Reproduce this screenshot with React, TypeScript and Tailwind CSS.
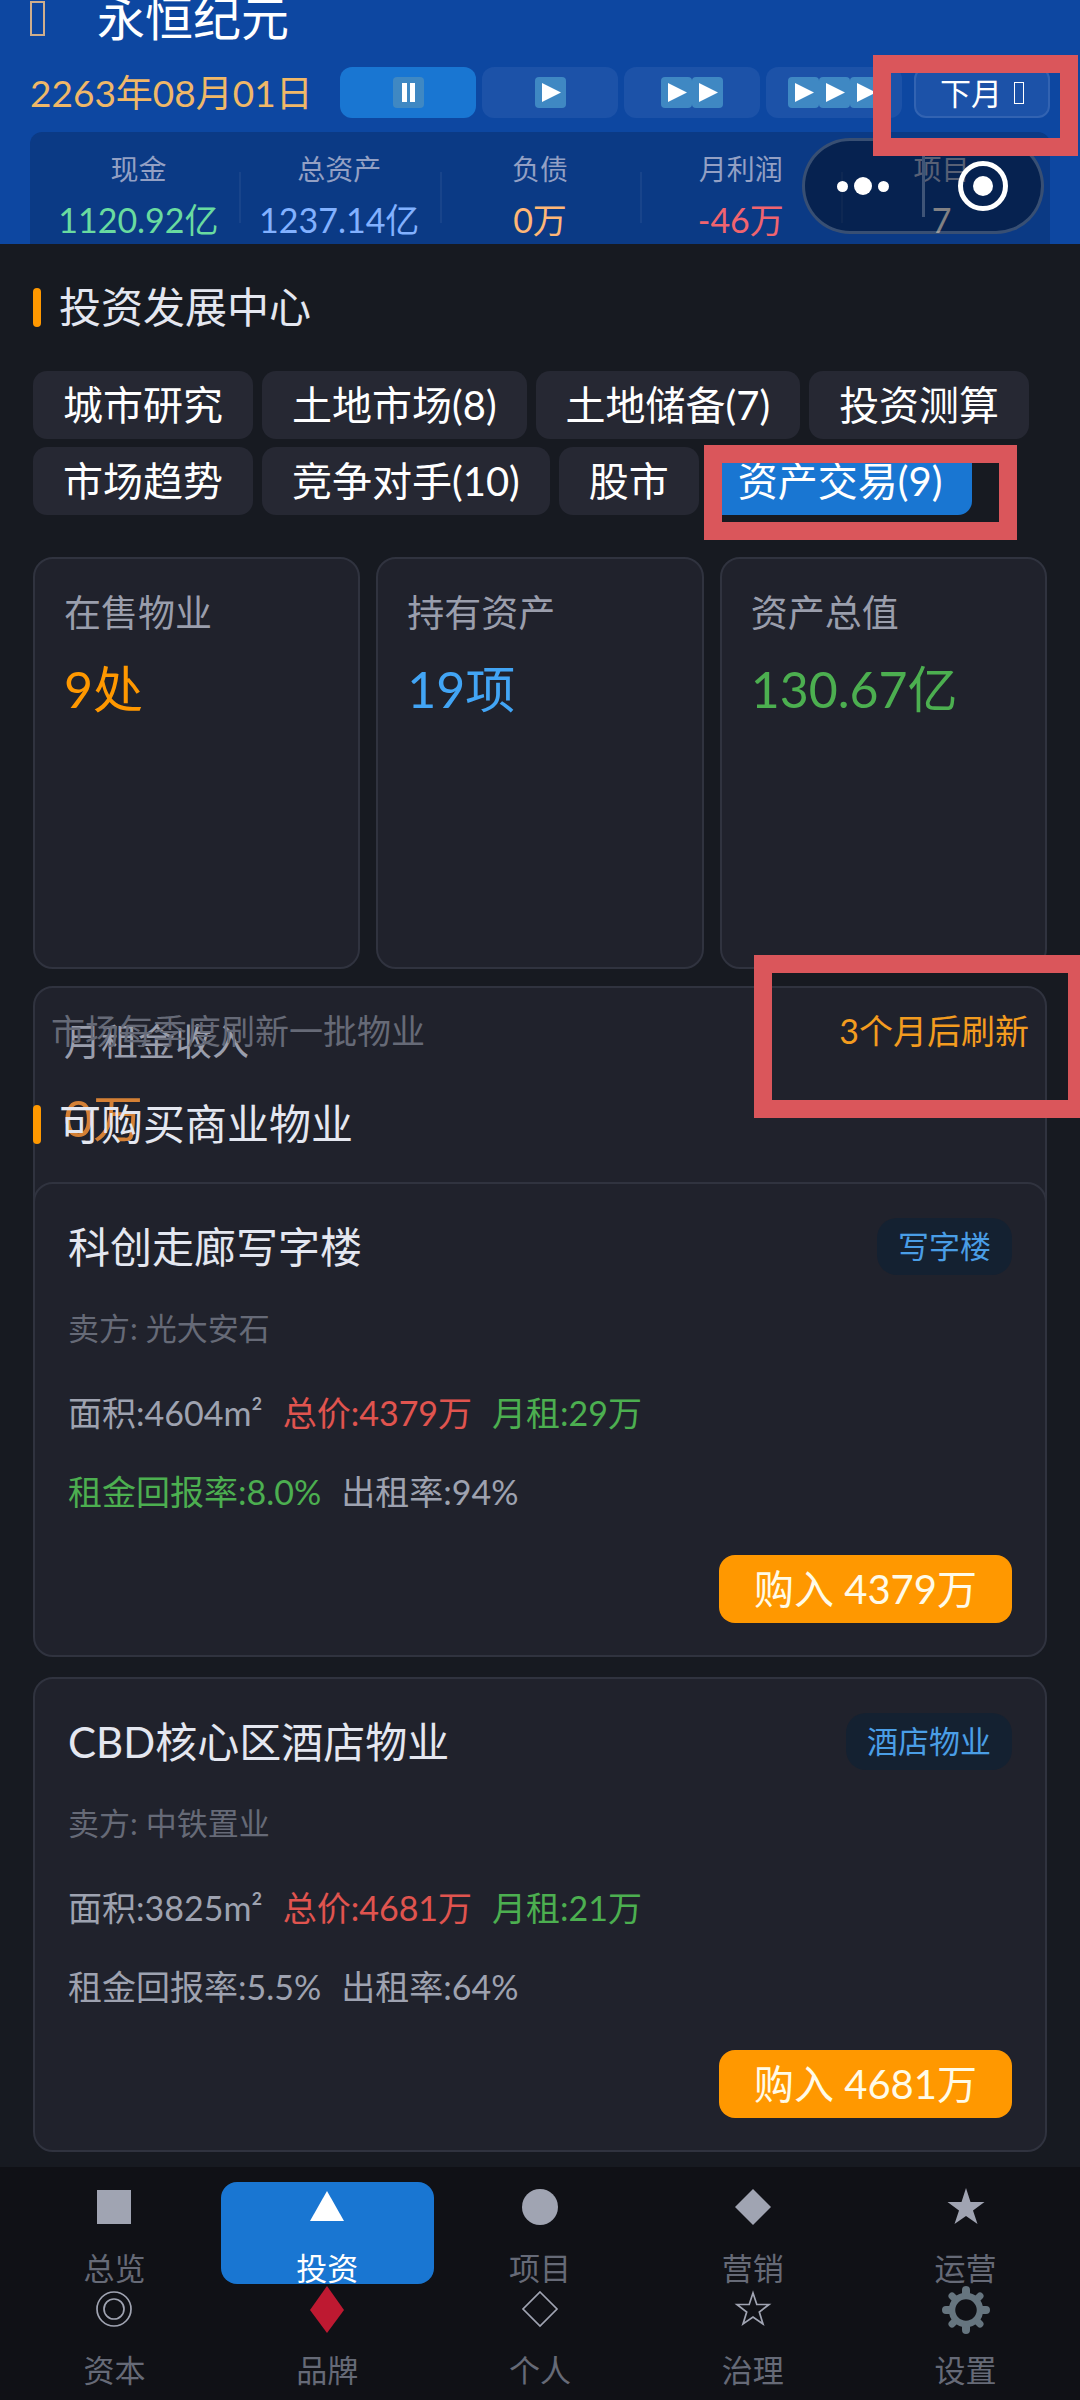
import React from 'react';

type Tone = 'gray' | 'red' | 'green';

interface Property {
    name: string;
    kind: string;
    seller: string;
    price: string;
    facts: { text: string; tone: Tone }[][];
}

const toneClass: Record<Tone, string> = {
    gray: 'text-[#9ea2b0]',
    red: 'text-[#e0544f]',
    green: 'text-[#4caf50]',
};

const finances = [
    { label: '现金', value: '1120.92亿', color: 'text-[#69dba0]' },
    { label: '总资产', value: '1237.14亿', color: 'text-[#82b1ff]' },
    { label: '负债', value: '0万', color: 'text-[#ffb777]' },
    { label: '月利润', value: '-46万', color: 'text-[#f0646f]' },
    { label: '项目', value: '7', color: 'text-[#d8d8dc]' },
];

const tabs = ['城市研究', '土地市场(8)', '土地储备(7)', '投资测算', '市场趋势', '竞争对手(10)', '股市', '资产交易(9)'];

const summary = [
    { label: '在售物业', value: '9处', color: 'text-[#ff9800]' },
    { label: '持有资产', value: '19项', color: 'text-[#42a5f5]' },
    { label: '资产总值', value: '130.67亿', color: 'text-[#4caf50]' },
    { label: '月租金收入', value: '0万', color: 'text-[#d48035]' },
];

const properties: Property[] = [
    {
        name: '科创走廊写字楼',
        kind: '写字楼',
        seller: '光大安石',
        price: '4379万',
        facts: [
            [
                { text: '面积:4604m²', tone: 'gray' },
                { text: '总价:4379万', tone: 'red' },
                { text: '月租:29万', tone: 'green' },
            ],
            [
                { text: '租金回报率:8.0%', tone: 'green' },
                { text: '出租率:94%', tone: 'gray' },
            ],
        ],
    },
    {
        name: 'CBD核心区酒店物业',
        kind: '酒店物业',
        seller: '中铁置业',
        price: '4681万',
        facts: [
            [
                { text: '面积:3825m²', tone: 'gray' },
                { text: '总价:4681万', tone: 'red' },
                { text: '月租:21万', tone: 'green' },
            ],
            [
                { text: '租金回报率:5.5%', tone: 'gray' },
                { text: '出租率:64%', tone: 'gray' },
            ],
        ],
    },
];

const navItems = [
    { label: '总览', icon: <rect x="7" y="8" width="34" height="34" fill="#a0a4b2" /> },
    { label: '投资', icon: <path d="M24 9 L41 39 H7 Z" fill="#fff" /> },
    { label: '项目', icon: <circle cx="24" cy="25" r="18" fill="#a0a4b2" /> },
    { label: '营销', icon: <path d="M24 7 L42 25 L24 43 L6 25 Z" fill="#a0a4b2" /> },
    { label: '运营', icon: <path d="M24 6 L28.5 20 H42.5 L31 28.5 L35.5 42 L24 34 L12.5 42 L17 28.5 L5.5 20 H19.5 Z" fill="#a0a4b2" /> },
    {
        label: '资本',
        icon: (
            <g fill="none" stroke="#a0a4b2" strokeWidth="1.7">
                <circle cx="24" cy="25" r="17" />
                <circle cx="24" cy="25" r="10" />
            </g>
        ),
    },
    { label: '品牌', icon: <path d="M24 2 L41 26 L24 49 L7 26 Z" fill="#be1931" /> },
    { label: '个人', icon: <path d="M24 8 L41 25 L24 42 L7 25 Z" fill="none" stroke="#a0a4b2" strokeWidth="1.7" /> },
    { label: '治理', icon: <path d="M24 9 L27.8 20.5 H40 L30.3 28 L34 40 L24 33 L14 40 L17.7 28 L8 20.5 H20.2 Z" fill="none" stroke="#a0a4b2" strokeWidth="1.7" /> },
    {
        label: '设置',
        icon: (
            <g fill="none" stroke="#66757f">
                <circle cx="24" cy="26" r="14" strokeWidth="6.5" />
                <path
                    d="M24 9 V6 M24 43 V46 M7 26 H4 M41 26 H44"
                    strokeWidth="8"
                    strokeLinecap="round"
                />
                <path d="M12 14 L10 12 M36 14 L38 12 M12 38 L10 40 M36 38 L38 40" strokeWidth="7" strokeLinecap="round" />
            </g>
        ),
    },
];

// Red marker box drawn over a control
function Marker({ className }: { className: string }) {
    return <div className={`pointer-events-none absolute z-30 border-18 border-[#da565b] ${className}`} />;
}

function PlayTile({ paused = false }: { paused?: boolean }) {
    return (
        <svg viewBox="0 0 31 31" className="h-[31px] w-[31px] shrink-0">
            <rect width="31" height="31" rx="4" fill="#3f88c3" />
            {paused ? <path d="M9 6 H14 V25 H9 Z M17 6 H22 V25 H17 Z" fill="#fff" /> : <path d="M7 6 L26 15.5 L7 25 Z" fill="#fff" />}
        </svg>
    );
}

function SectionTitle({ children }: { children: React.ReactNode }) {
    return (
        <h2 className="flex h-14 items-center gap-[18px] text-[42px] leading-[56px] text-[#e4e7f0]">
            <span className="h-[39px] w-2 rounded-full bg-[#ff9800]" />
            {children}
        </h2>
    );
}

function Header() {
    return (
        <header className="relative h-[244px] overflow-hidden bg-[#0d47a1] px-[30px]">
            {/* Title */}
            <div className="flex h-[36px] items-center gap-[52px]">
                <span className="h-[35px] w-[15px] border-2 border-[#cfae8c]" />
                <h1 className="text-[48px] leading-[36px] text-white">永恒纪元</h1>
            </div>

            {/* Date and speed */}
            <div className="mt-[31px] flex h-[51px] items-stretch">
                <time className="w-[310px] shrink-0 whitespace-nowrap text-[37px] leading-[51px] text-[#f0b868]">2263年08月01日</time>
                <div className="flex flex-1 gap-[6px]">
                    <button aria-label="暂停" className="flex flex-1 items-center justify-center rounded-[12px] bg-[#1976d2]">
                        <PlayTile paused />
                    </button>
                    {[1, 2, 3].map((speed) => (
                        <button key={speed} aria-label={`${speed}倍速`} className="flex flex-1 items-center justify-center rounded-[12px] bg-[#1c52a8]">
                            {Array.from({ length: speed }, (_, i) => (
                                <PlayTile key={i} />
                            ))}
                        </button>
                    ))}
                </div>
                <div className="relative ml-3 flex w-[136px]">
                    <button className="flex flex-1 items-center justify-center gap-3 rounded-[12px] border-2 border-[#3263b2] bg-[#1c52a8] text-[31px] leading-[40px] text-white">
                        下月
                        <span className="h-[22px] w-[10px] border border-white" />
                    </button>
                    <Marker className="-top-3 -right-7 h-[101px] w-[205px]" />
                </div>
            </div>

            {/* Finance strip */}
            <div className="mt-[14px] flex h-[140px] rounded-[12px] bg-[#0b3a85] px-2">
                {finances.map((item, i) => (
                    <div key={item.label} className="flex flex-1">
                        {i > 0 && <div className="mt-10 -mr-[2px] h-[51px] w-[2px] bg-[#18448b]" />}
                        <div className="flex flex-1 flex-col items-center pt-[17px]">
                            <span className="text-[28px] leading-[40px] text-[#93a0c4]">{item.label}</span>
                            <span className={`mt-[6px] text-[34px] leading-[50px] ${item.color}`}>{item.value}</span>
                        </div>
                    </div>
                ))}
            </div>

            {/* Mini program capsule */}
            <div className="absolute top-[138px] right-[36px] flex h-24 w-[242px] items-center rounded-full border-[3px] border-white/20 bg-black/40">
                <button aria-label="更多" className="flex flex-1 items-center justify-center gap-[6px]">
                    <span className="h-[11px] w-[11px] rounded-full bg-white" />
                    <span className="h-[18px] w-[18px] rounded-full bg-white" />
                    <span className="h-[11px] w-[11px] rounded-full bg-white" />
                </button>
                <span className="h-[61px] w-[3px] bg-[#3f5477]" />
                <button aria-label="关闭" className="flex flex-1 items-center justify-center">
                    <span className="flex h-[50px] w-[50px] items-center justify-center rounded-full border-[5px] border-white">
                        <span className="h-5 w-5 rounded-full bg-white" />
                    </span>
                </button>
            </div>
        </header>
    );
}

function PropertyCard({ property }: { property: Property }) {
    return (
        <article className="rounded-[20px] border-2 border-[#30333f] bg-[#20222c] px-[33px] pt-[34px] pb-8">
            <div className="flex h-[57px] items-center justify-between">
                <h3 className="text-[42px] leading-[56px] text-[#e4e7f0]">{property.name}</h3>
                <span className="rounded-[20px] bg-[#142131] px-[21px] text-[31px] leading-[57px] text-[#4a9ee6]">{property.kind}</span>
            </div>
            <p className="mt-[30px] text-[31px] leading-[46px] text-[#666a77]">卖方: {property.seller}</p>
            <div className="mt-[22px]">
                {property.facts.map((line, i) => (
                    <p key={i} className="flex gap-5 text-[34px] leading-[79px]">
                        {line.map((fact) => (
                            <span key={fact.text} className={toneClass[fact.tone]}>
                                {fact.text}
                            </span>
                        ))}
                    </p>
                ))}
            </div>
            <div className="mt-[24px] flex justify-end">
                <button className="h-[68px] rounded-[16px] bg-[#ff9800] px-[35px] text-[40px] leading-[68px] text-[#fffbe8]">购入 {property.price}</button>
            </div>
        </article>
    );
}

function BottomNav() {
    return (
        <nav className="grid grid-cols-5 bg-[#101116] px-2 pt-[15px] pb-[14px]">
            {navItems.map((item) => {
                const active = item.label === '投资';
                return (
                    <button
                        key={item.label}
                        className={`flex h-[102px] flex-col items-center rounded-[16px] text-[31px] leading-[36px] ${active ? 'bg-[#1976d2] text-white' : 'text-[#666a77]'}`}
                    >
                        <svg viewBox="0 0 48 50" className="h-[50px] w-12 shrink-0 overflow-visible">
                            {item.icon}
                        </svg>
                        <span className="mt-[18px]">{item.label}</span>
                    </button>
                );
            })}
        </nav>
    );
}

export default function App() {
    return (
        <div className="min-h-screen overflow-x-hidden bg-[#171a21] font-['Lato','Noto_Sans_CJK_SC',sans-serif]">
            <Header />

            <main className="px-[33px] pt-[35px] pb-[15px]">
                <SectionTitle>投资发展中心</SectionTitle>

                <div className="mt-9 flex flex-wrap gap-x-[9px] gap-y-2">
                    {tabs.map((tab) => {
                        const active = tab.startsWith('资产交易');
                        return (
                            <div key={tab} className="relative">
                                <button
                                    className={`h-[68px] rounded-[14px] px-[30px] text-[40px] leading-[66px] whitespace-nowrap text-white ${active ? 'bg-[#1976d2]' : 'bg-[#262833]'}`}
                                >
                                    {tab}
                                </button>
                                {active && <Marker className="-top-[2px] -left-1 h-[95px] w-[313px]" />}
                            </div>
                        );
                    })}
                </div>

                {/* Summary cards: the fourth one wraps and runs under the list below */}
                <div className="mt-[42px] grid h-[412px] auto-rows-[412px] grid-cols-3 gap-x-4 gap-y-[17px]">
                    {summary.map((item, i) => (
                        <div key={item.label} className={`rounded-[20px] border-2 border-[#30333f] bg-[#20222c] px-[29px] pt-[30px] ${i === 3 ? 'col-span-3' : ''}`}>
                            <div className="text-[37px] leading-[48px] text-[#9a9eac]">{item.label}</div>
                            <div className={`mt-5 text-[50px] leading-[64px] ${item.color}`}>{item.value}</div>
                        </div>
                    ))}
                </div>

                <div className="relative">
                    <div className="mt-[38px] flex justify-between px-[18px] text-[34px] leading-[48px]">
                        <span className="text-[#666a77]">市场每季度刷新一批物业</span>
                        <div className="relative text-[#f39c1f]">
                            3个月后刷新
                            <Marker className="-top-[52px] -right-[57px] h-[163px] w-[332px]" />
                        </div>
                    </div>

                    <div className="mt-[41px]">
                        <SectionTitle>可购买商业物业</SectionTitle>
                    </div>

                    <div className="mt-[30px] flex flex-col gap-5">
                        {properties.map((property) => (
                            <PropertyCard key={property.name} property={property} />
                        ))}
                    </div>
                </div>
            </main>

            <BottomNav />
        </div>
    );
}
